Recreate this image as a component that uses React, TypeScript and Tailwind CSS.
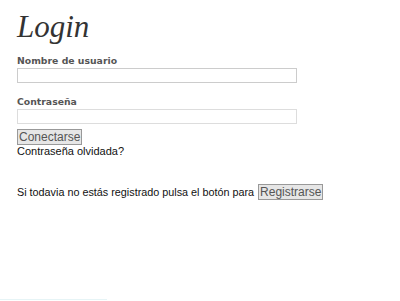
export default function App() {
  return (
    <div className="relative h-[301px] w-[400px] overflow-hidden bg-white">
      <div className="pl-[17px] pt-[8px]">
        <h1 className="font-['Liberation_Serif',serif] text-[31px] italic leading-[38px] text-[#333]">
          Login
        </h1>
        <form className="mt-[9px] flex flex-col items-start">
          <label className="font-['DejaVu_Sans',sans-serif] text-[9.3px] font-bold leading-[12px] text-[#555]">
            Nombre de usuario
          </label>
          <input
            type="text"
            className="mt-[1px] h-[15px] w-[280px] border border-[#ccc] bg-white"
          />
          <label className="mt-[13px] font-['DejaVu_Sans',sans-serif] text-[9.3px] font-bold leading-[12px] text-[#555]">
            Contraseña
          </label>
          <input
            type="password"
            className="mt-[1px] h-[15px] w-[280px] border border-[#ddd] bg-white"
          />
          <button
            type="button"
            className="mt-[5px] h-[16px] border border-[#999] bg-[#e6e6e6] px-[1px] font-['Liberation_Sans',sans-serif] text-[12px] leading-[14px] text-[#555]"
          >
            Conectarse
          </button>
          <p className="font-['Liberation_Sans',sans-serif] text-[11px] leading-[13px] text-[#111]">
            Contraseña olvidada?
          </p>
        </form>
        <div className="mt-[26px] flex items-center font-['Liberation_Sans',sans-serif] text-[10.8px] leading-[16px] text-[#111]">
          <span>Si todavia no estás registrado pulsa el botón para</span>
          <button
            type="button"
            className="ml-[4px] h-[16px] border border-[#999] bg-[#e6e6e6] px-[1px] text-[12px] leading-[14px] text-[#555]"
          >
            Registrarse
          </button>
        </div>
      </div>
      <div className="absolute bottom-[1px] left-0 h-[1px] w-[107px] bg-[#e6f4f6]" />
    </div>
  );
}
